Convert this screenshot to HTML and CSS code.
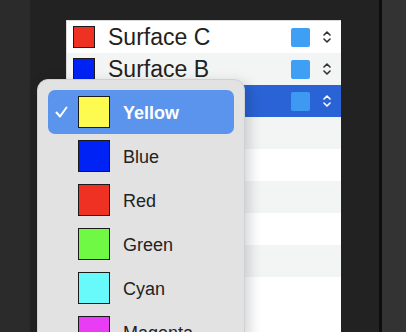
FILE: index.html
```html
<!DOCTYPE html>
<html lang="en">

<head>
    <meta charset="UTF-8">
    <meta name="viewport" content="width=device-width, initial-scale=1.0">
    <title>Surface Colors</title>
    <link rel="stylesheet" href="styles.css">
</head>

<body>
    <div class="window">
        <div class="sidebar"></div>
        <div class="main">
            <div class="surface-list">
                <div class="row">
                    <span class="swatch red"></span>
                    <span class="row-name">Surface C</span>
                    <span class="chip"></span>
                    <svg class="stepper" width="8" height="14" viewBox="0 0 8 14"><path d="M1 5 L4 2 L7 5 M1 9 L4 12 L7 9" fill="none" stroke="currentColor" stroke-width="1.6" stroke-linecap="round" stroke-linejoin="round"/></svg>
                </div>
                <div class="row">
                    <span class="swatch blue"></span>
                    <span class="row-name">Surface B</span>
                    <span class="chip"></span>
                    <svg class="stepper" width="8" height="14" viewBox="0 0 8 14"><path d="M1 5 L4 2 L7 5 M1 9 L4 12 L7 9" fill="none" stroke="currentColor" stroke-width="1.6" stroke-linecap="round" stroke-linejoin="round"/></svg>
                </div>
                <div class="row selected">
                    <span class="swatch yellow"></span>
                    <span class="row-name"></span>
                    <span class="chip"></span>
                    <svg class="stepper" width="8" height="14" viewBox="0 0 8 14"><path d="M1 5 L4 2 L7 5 M1 9 L4 12 L7 9" fill="none" stroke="currentColor" stroke-width="1.6" stroke-linecap="round" stroke-linejoin="round"/></svg>
                </div>
                <div class="row"></div>
                <div class="row"></div>
                <div class="row"></div>
                <div class="row"></div>
                <div class="row"></div>
                <div class="row"></div>
            </div>
        </div>
        <div class="divider"></div>
        <div class="inspector"></div>
    </div>

    <!-- popup menu opened from the selected row -->
    <div class="menu">
        <div class="menu-item active">
            <span class="check"><svg width="13" height="12" viewBox="0 0 13 12"><path d="M1.5 6.5 L5 10.5 L11.5 1.5" fill="none" stroke="white" stroke-width="2" stroke-linecap="round" stroke-linejoin="round"/></svg></span>
            <span class="swatch big yellow"></span>
            <span class="menu-label">Yellow</span>
        </div>
        <div class="menu-item">
            <span class="check"></span>
            <span class="swatch big blue"></span>
            <span class="menu-label">Blue</span>
        </div>
        <div class="menu-item">
            <span class="check"></span>
            <span class="swatch big red"></span>
            <span class="menu-label">Red</span>
        </div>
        <div class="menu-item">
            <span class="check"></span>
            <span class="swatch big green"></span>
            <span class="menu-label">Green</span>
        </div>
        <div class="menu-item">
            <span class="check"></span>
            <span class="swatch big cyan"></span>
            <span class="menu-label">Cyan</span>
        </div>
        <div class="menu-item">
            <span class="check"></span>
            <span class="swatch big magenta"></span>
            <span class="menu-label">Magenta</span>
        </div>
    </div>
</body>

</html>
```

FILE: styles.css
```css
body,
html {
    margin: 0;
    padding: 0;
    height: 100%;
    overflow: hidden;
    font-family: "Liberation Sans", Arial, sans-serif;
    background-color: #222222;
}

.window {
    display: flex;
    height: 100%;
}

.sidebar {
    width: 30px;
    background-color: #2b2b2b;
}

.main {
    flex: 1;
    background-color: #222222;
    padding: 20px 38px 0 36px;
}

.divider {
    width: 3px;
    background-color: #0e0e0e;
}

.inspector {
    width: 24px;
    background-color: #333333;
}

.surface-list {
    height: 100%;
    background: white;
    border-top: 1px solid #d9d9d9;
    border-left: 1px solid #d9d9d9;
}

.row {
    height: 32px;
    display: flex;
    align-items: center;
    padding: 0 10px 0 6px;
    background-color: white;
    color: #222;
}

.row:nth-child(even) {
    background-color: #f3f4f4;
}

.row.selected {
    background-color: #2a63d5;
    color: white;
}

.swatch {
    width: 20px;
    height: 20px;
    border: 1px solid #1a1a1a;
    flex-shrink: 0;
}

.swatch.big {
    width: 30px;
    height: 30px;
}

.red { background-color: #ef3124; }
.blue { background-color: #0022f5; }
.yellow { background-color: #fdfa50; }
.green { background-color: #6ff944; }
.cyan { background-color: #68fafb; }
.magenta { background-color: #e93cf5; }

.row-name {
    flex: 1;
    margin-left: 13px;
    font-size: 23px;
    line-height: 32px;
}

.chip {
    width: 19px;
    height: 19px;
    border-radius: 2px;
    background-color: #3f9ff5;
    margin-right: 13px;
}

.row.selected .chip {
    background-color: #3d99f2;
}

.stepper {
    color: #333;
}

.row.selected .stepper {
    color: white;
}

.menu {
    position: absolute;
    left: 38px;
    top: 80px;
    width: 186px;
    height: 280px;
    padding: 10px;
    background-color: #e2e2e2;
    border: 1px solid #ccd1d5;
    border-radius: 11px;
    box-shadow: 4px 4px 14px rgba(0, 0, 0, 0.18);
    box-sizing: content-box;
    margin: -1px 0 0 -1px;
}

.menu-item {
    height: 44px;
    display: flex;
    align-items: center;
    border-radius: 7px;
    color: #222;
}

.menu-item.active {
    background-color: #5a94ec;
    color: white;
}

.check {
    width: 30px;
    height: 12px;
    padding-left: 7px;
    box-sizing: border-box;
    display: flex;
}

.menu-label {
    margin-left: 13px;
    font-size: 18px;
    line-height: 44px;
    padding-top: 2px;
}

.menu-item.active .menu-label {
    font-weight: bold;
}
```
